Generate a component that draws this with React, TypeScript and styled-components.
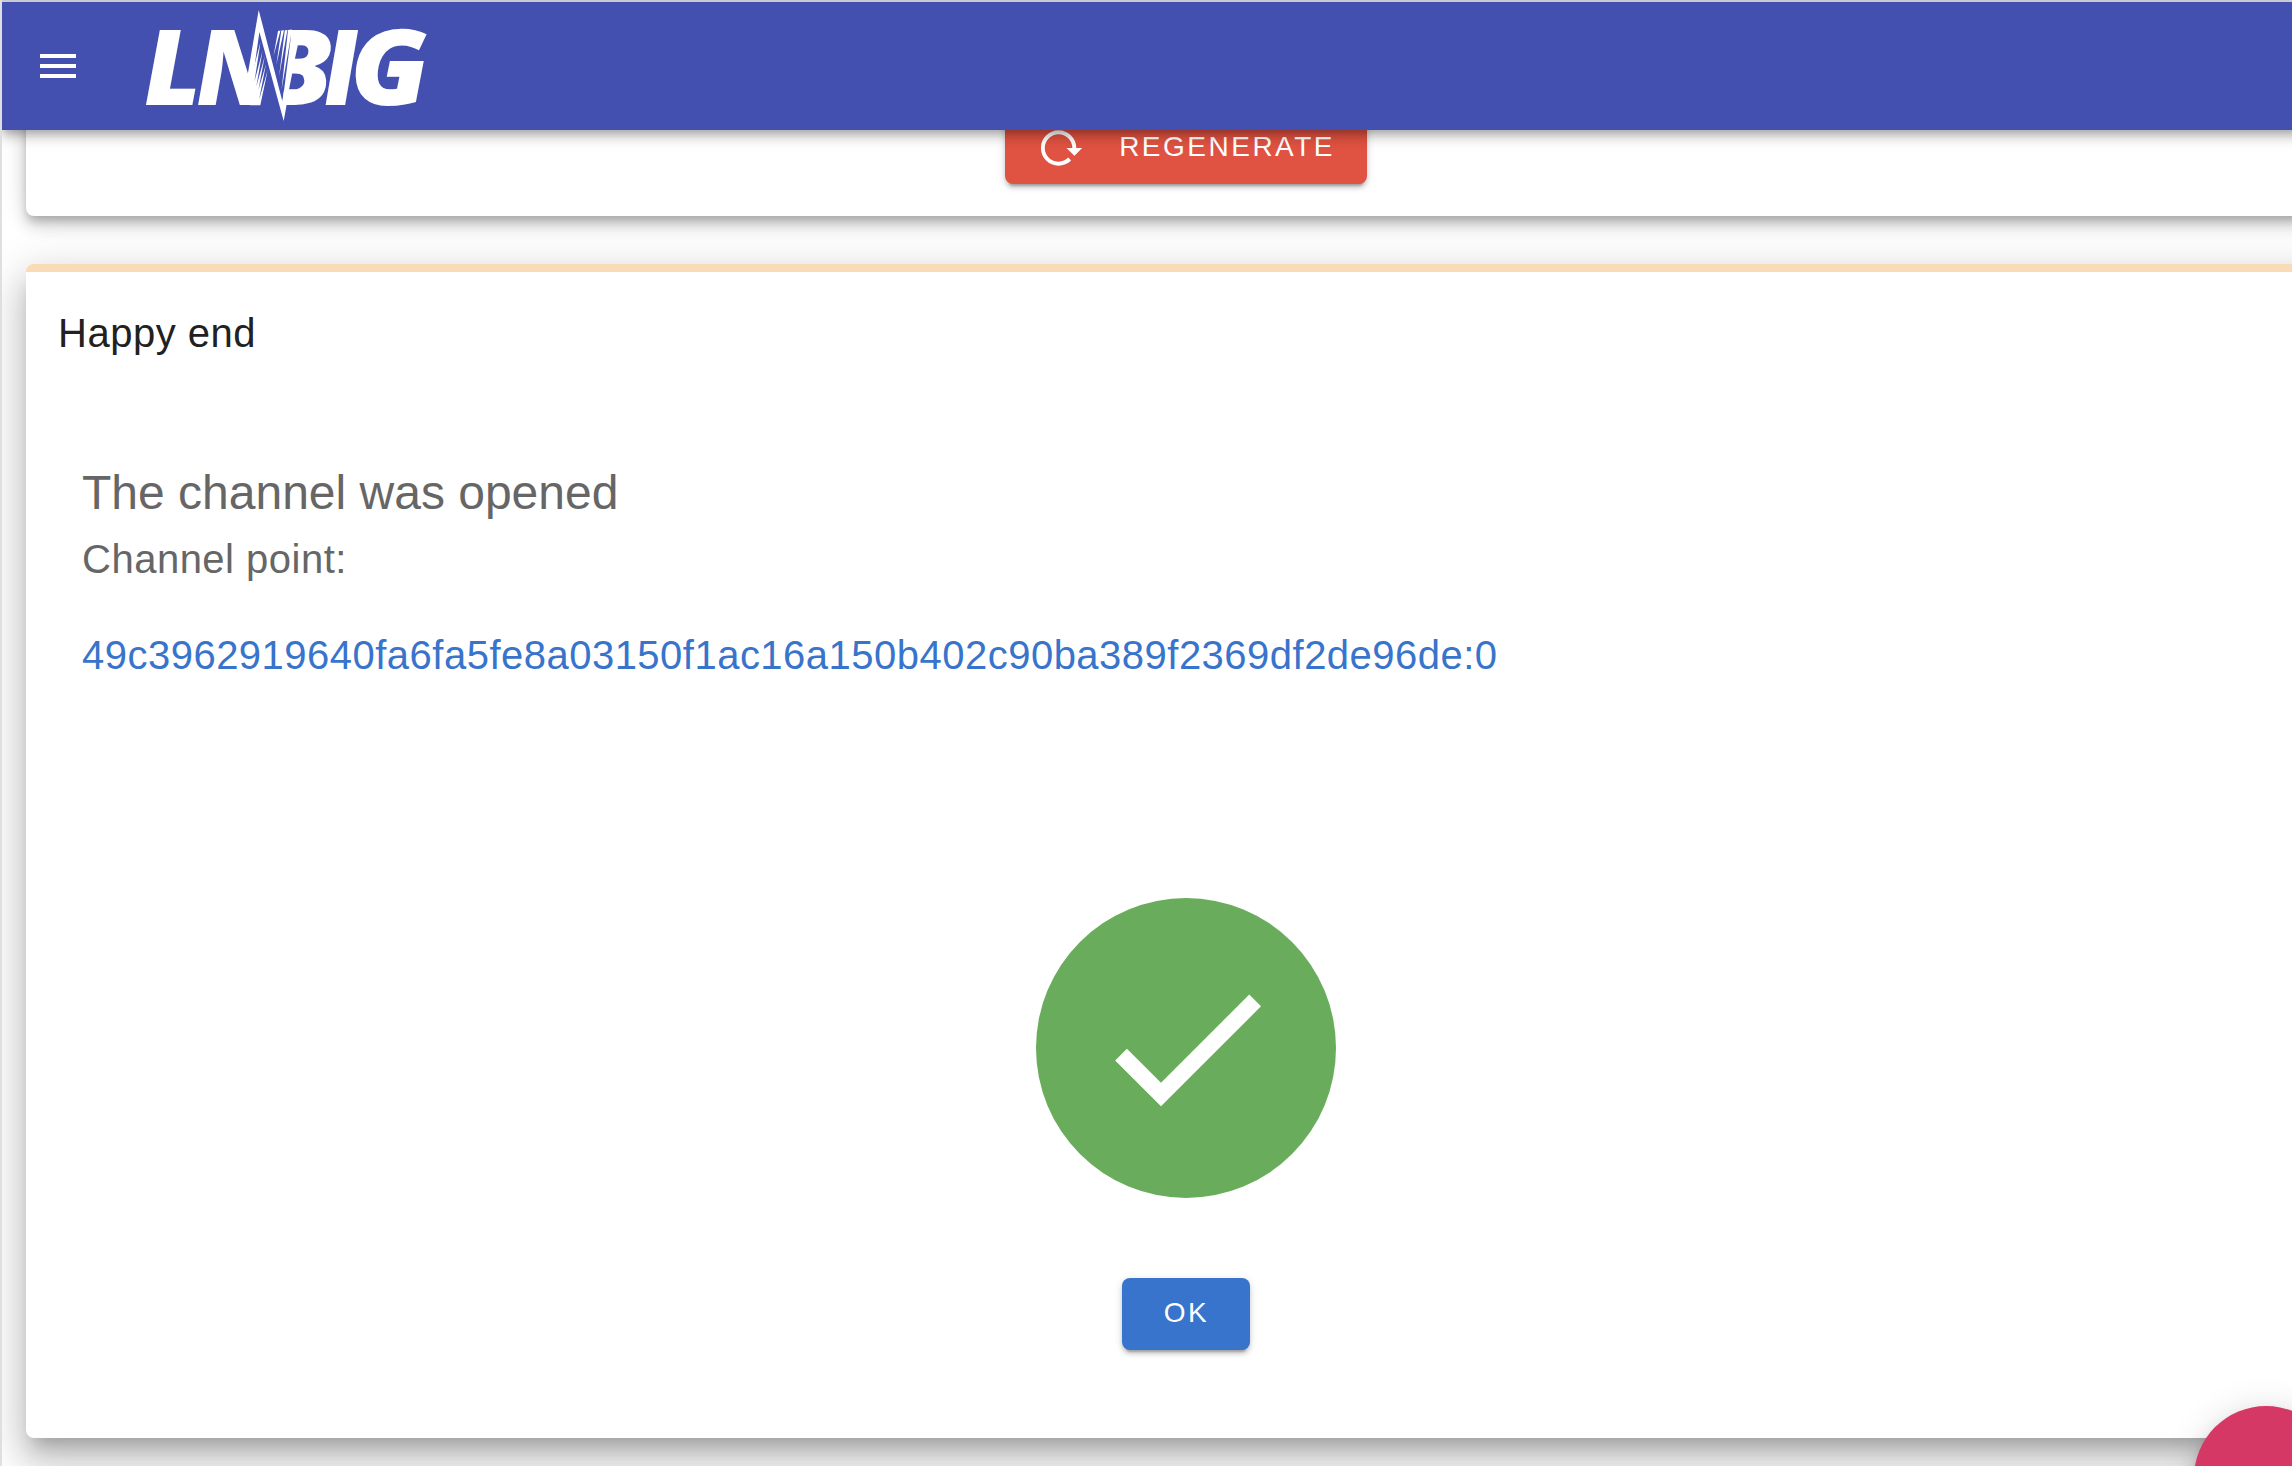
import React from "react";
import styled, { createGlobalStyle } from "styled-components";

const GlobalStyle = createGlobalStyle`
  *, *::before, *::after { box-sizing: border-box; }
  html, body { margin: 0; padding: 0; overflow: hidden; }
  body { font-family: "Liberation Sans", Helvetica, Arial, sans-serif; background: #fff; }
`;

const Page = styled.div`
  position: relative;
  display: flex;
  flex-direction: column;
  height: 1466px;
  width: 2292px;
  overflow: hidden;
  border-left: 2px solid #dfdfdf;
  background: #fff;
`;

const AppBar = styled.header`
  position: relative;
  z-index: 2;
  flex: none;
  display: flex;
  align-items: center;
  width: 2370px;
  height: 130px;
  padding-left: 32px;
  background: #4350af;
  border-top: 2px solid #c9cad2;
  box-shadow: 0 4px 8px -2px rgba(0, 0, 0, 0.2), 0 8px 10px 0 rgba(0, 0, 0, 0.14),
    0 2px 20px 0 rgba(0, 0, 0, 0.12);
`;

const MenuButton = styled.button`
  display: flex;
  width: 48px;
  height: 48px;
  padding: 0;
  border: 0;
  background: none;
`;

const Logo = styled.svg`
  display: block;
  margin-left: 58px;
  flex: none;
  overflow: visible;
`;

const LogoText = styled.text`
  font-family: "Open Sans", sans-serif;
  font-size: 105px;
  font-weight: 800;
  font-style: italic;
  fill: #fff;
`;

const Main = styled.main`
  flex: 1;
  display: flex;
  flex-direction: column;
  width: 2368px;
  min-height: 0;
  padding: 0 24px;
`;

const Card = styled.section`
  flex: none;
  display: flex;
  flex-direction: column;
  border-radius: 8px;
  background: #fff;
`;

const InvoiceCard = styled(Card)`
  align-items: center;
  margin-top: -50px;
  padding: 32px;
  box-shadow: 0 6px 10px -2px rgba(0, 0, 0, 0.2), 0 10px 16px 0 rgba(0, 0, 0, 0.14),
    0 2px 28px 0 rgba(0, 0, 0, 0.12);
`;

const ResultCard = styled(Card)`
  height: 1174px;
  margin-top: 48px;
  border-top: 8px solid #f9dcb5;
  box-shadow: 0 14px 16px -8px rgba(0, 0, 0, 0.2), 0 24px 34px 4px rgba(0, 0, 0, 0.14),
    0 10px 44px 8px rgba(0, 0, 0, 0.12);
`;

const Button = styled.button<{ $color: string }>`
  display: flex;
  align-items: center;
  justify-content: center;
  height: 72px;
  padding: 0 32px;
  border: 0;
  border-radius: 8px;
  background: ${(p) => p.$color};
  color: #fff;
  font: 400 28px/36px "Liberation Sans", Helvetica, Arial, sans-serif;
  letter-spacing: 2.5px;
  text-transform: uppercase;
  box-shadow: 0 6px 2px -4px rgba(0, 0, 0, 0.2), 0 4px 4px 0 rgba(0, 0, 0, 0.14),
    0 2px 10px 0 rgba(0, 0, 0, 0.12);
`;

const ButtonLabel = styled.span`
  padding: 0 0 2px 1px;
`;

const RegenerateButton = styled(Button)`
  width: 362px;
  justify-content: flex-start;
  gap: 34px;
`;

const OkButton = styled(Button)`
  width: 128px;
  margin-top: 80px;
`;

const Title = styled.h2`
  margin: 0;
  padding: 29px 32px 0;
  font-size: 40px;
  font-weight: 400;
  line-height: 64px;
  letter-spacing: 0.5px;
  color: #212121;
`;

const Details = styled.div`
  display: flex;
  flex-direction: column;
  padding: 96px 56px 0;
  color: #666;
  font-size: 40px;
  letter-spacing: 0.5px;
`;

const Headline = styled.div`
  font-size: 48px;
  line-height: 64px;
  letter-spacing: 0;
`;

const Label = styled.div`
  line-height: 64px;
  margin-top: 2px;
`;

const PointLink = styled.a`
  margin-top: 32px;
  line-height: 64px;
  color: #3874cb;
  letter-spacing: 0.485px;
  white-space: nowrap;
`;

const Outcome = styled.div`
  display: flex;
  flex-direction: column;
  align-items: center;
  margin-top: 211px;
`;

const SuccessBadge = styled.div`
  display: flex;
  align-items: center;
  justify-content: center;
  width: 300px;
  height: 300px;
  border-radius: 50%;
  background: #69ad5c;
`;

const Fab = styled.button`
  position: absolute;
  z-index: 3;
  left: 2192px;
  top: 1406px;
  width: 144px;
  height: 144px;
  border: 0;
  border-radius: 50%;
  background: #d53864;
  box-shadow: 0 6px 10px -2px rgba(0, 0, 0, 0.2), 0 12px 20px 0 rgba(0, 0, 0, 0.14),
    0 2px 36px 0 rgba(0, 0, 0, 0.12);
`;

const MENU = "M3,6H21V8H3V6M3,11H21V13H3V11M3,16H21V18H3V16Z";
const RELOAD =
  "M2 12C2 16.97 6.03 21 11 21C13.39 21 15.68 20.06 17.4 18.4L15.9 16.9C14.63 18.25 12.86 19 11 19C4.76 19 1.64 11.46 6.05 7.05C10.46 2.64 18 5.77 18 12H15L19 16H19.1L23 12H20C20 7.03 15.97 3 11 3C6.03 3 2 7.03 2 12Z";
const CHECK = "M21,7L9,19L3.5,13.5L4.91,12.09L9,16.17L19.59,5.59L21,7Z";

const Icon = ({ d, size }: { d: string; size: number }) => (
  <svg width={size} height={size} viewBox="0 0 24 24" fill="#fff">
    <path d={d} />
  </svg>
);

const BrandLogo = () => (
  <Logo width={290} height={128} viewBox="140 2 290 128">
    <LogoText transform="translate(144.2 105.3) skewX(2) scale(1.04 1)">L</LogoText>
    <LogoText transform="translate(196.5 105.3) skewX(1.7) scale(.98 1)">N</LogoText>
    {/* the right stem of the N gives way to the hatching */}
    <path fill="#4350af" d="M259.5 26H302V108H260.5L251 83Z" />
    <path
      fill="#fff"
      d="M250.5 80L260.5 42L253.5 88ZM253 87L262.5 51L255 94ZM254.5 93L264.8 56L256.5 100ZM256 98L266 64L258 105.3ZM257.5 105.3L268 69L260.3 105.3ZM247.5 76L252 80L259 105.3H250Z"
    />
    <LogoText transform="translate(262.5 105.3) skewX(2) scale(1.08 1)">B</LogoText>
    <path fill="#4350af" d="M275 26H291L290.5 40L282.8 100L284 107H262Z" />
    <LogoText transform="translate(324 105.3) skewX(1.8) scale(.97 1)">I</LogoText>
    <LogoText transform="translate(351 105.3) skewX(2) scale(1.08 1)">G</LogoText>
    <path
      fill="#fff"
      d="M278 31L280.5 30.5L273.5 56ZM281.3 30.5L284 30.2L276.3 65ZM284.8 30.2L287.4 30L279 77ZM288 30L292 29.6L281.5 90Z"
    />
    <path
      fill="#fff"
      d="M258.7 10L282.3 101L284 90H288L286.4 106L283.7 121L259.4 32L252 84L247.3 77Z"
    />
  </Logo>
);

export default function App() {
  return (
    <>
      <GlobalStyle />
      <Page>
        <AppBar>
          <MenuButton aria-label="Menu">
            <Icon d={MENU} size={48} />
          </MenuButton>
          <BrandLogo />
        </AppBar>
        <Main>
          <InvoiceCard>
            <RegenerateButton $color="#e05241">
              <Icon d={RELOAD} size={48} />
              <ButtonLabel>Regenerate</ButtonLabel>
            </RegenerateButton>
          </InvoiceCard>
          <ResultCard>
            <Title>Happy end</Title>
            <Details>
              <Headline>The channel was opened</Headline>
              <Label>Channel point:</Label>
              <PointLink>49c3962919640fa6fa5fe8a03150f1ac16a150b402c90ba389f2369df2de96de:0</PointLink>
            </Details>
            <Outcome>
              <SuccessBadge>
                <Icon d={CHECK} size={200} />
              </SuccessBadge>
              <OkButton $color="#3874cb">
                <ButtonLabel>OK</ButtonLabel>
              </OkButton>
            </Outcome>
          </ResultCard>
        </Main>
        <Fab aria-label="Support" />
      </Page>
    </>
  );
}
